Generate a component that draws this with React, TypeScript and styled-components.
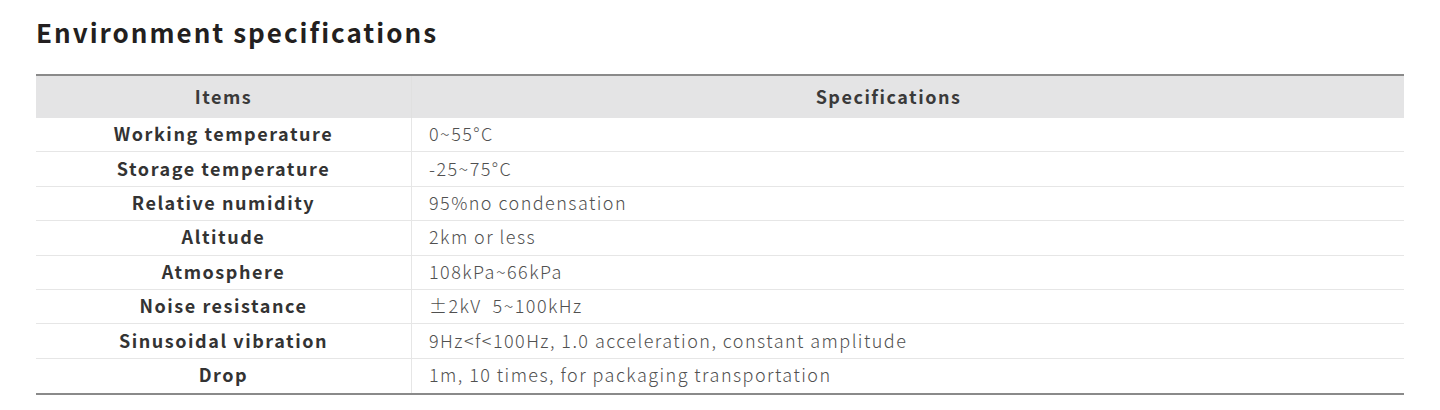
import React from "react";
import styled, { createGlobalStyle } from "styled-components";

const Global = createGlobalStyle`
  html, body { margin: 0; padding: 0; background: #ffffff; }
  body { font-family: "Noto Sans CJK SC", "Noto Sans", sans-serif; }
`;

const Page = styled.div`
  padding: 13px 36px 0 36px;
  width: 1368px;
`;

const Title = styled.h2`
  margin: 0;
  font-size: 26px;
  font-weight: 700;
  letter-spacing: 2px;
  color: #231f20;
  line-height: 38px;
`;

const Table = styled.div`
  margin-top: 23px;
  border-top: 2px solid #8a8a8a;
  border-bottom: 2px solid #8a8a8a;
  display: grid;
  grid-template-columns: 375px 1fr;
`;

const HeadCell = styled.div<{ $shift?: number }>`
  background: #e4e4e5;
  height: 42px;
  box-sizing: border-box;
  display: flex;
  align-items: center;
  justify-content: center;
  padding-bottom: 3px;
  padding-right: ${(p) => p.$shift ?? 0}px;
  font-size: 18px;
  font-weight: 700;
  letter-spacing: 1.5px;
  color: #3a3a3a;
  border-left: ${(p) => (p.$shift !== undefined ? "1px solid #e0e0e0" : "none")};
`;

const ItemCell = styled.div<{ $last?: boolean }>`
  height: 34.4px;
  box-sizing: border-box;
  display: flex;
  align-items: center;
  justify-content: center;
  padding-bottom: 3px;
  font-size: 18px;
  font-weight: 700;
  letter-spacing: 1.55px;
  color: #333333;
  border-bottom: ${(p) => (p.$last ? "none" : "1px solid #e6e6e6")};
`;

const ValueCell = styled.div<{ $last?: boolean }>`
  height: 34.4px;
  box-sizing: border-box;
  display: flex;
  align-items: center;
  padding-left: 17px;
  padding-bottom: 3px;
  font-size: 18px;
  font-weight: 300;
  letter-spacing: 1.45px;
  color: #505050;
  white-space: pre;
  border-left: 1px solid #e6e6e6;
  border-bottom: ${(p) => (p.$last ? "none" : "1px solid #e6e6e6")};
`;

const rows: [string, string][] = [
  ["Working temperature", "0~55°C"],
  ["Storage temperature", "-25~75°C"],
  ["Relative numidity", "95%no condensation"],
  ["Altitude", "2km or less"],
  ["Atmosphere", "108kPa~66kPa"],
  ["Noise resistance", "±2kV  5~100kHz"],
  ["Sinusoidal vibration", "9Hz<f<100Hz, 1.0 acceleration, constant amplitude"],
  ["Drop", "1m, 10 times, for packaging transportation"],
];

export default function App() {
  return (
    <>
      <Global />
      <Page>
        <Title>Environment specifications</Title>
        <Table>
          <HeadCell>Items</HeadCell>
          <HeadCell $shift={39}>Specifications</HeadCell>
          {rows.map(([k, v], i) => (
            <React.Fragment key={k}>
              <ItemCell $last={i === rows.length - 1}>{k}</ItemCell>
              <ValueCell $last={i === rows.length - 1}>{v}</ValueCell>
            </React.Fragment>
          ))}
        </Table>
      </Page>
    </>
  );
}
